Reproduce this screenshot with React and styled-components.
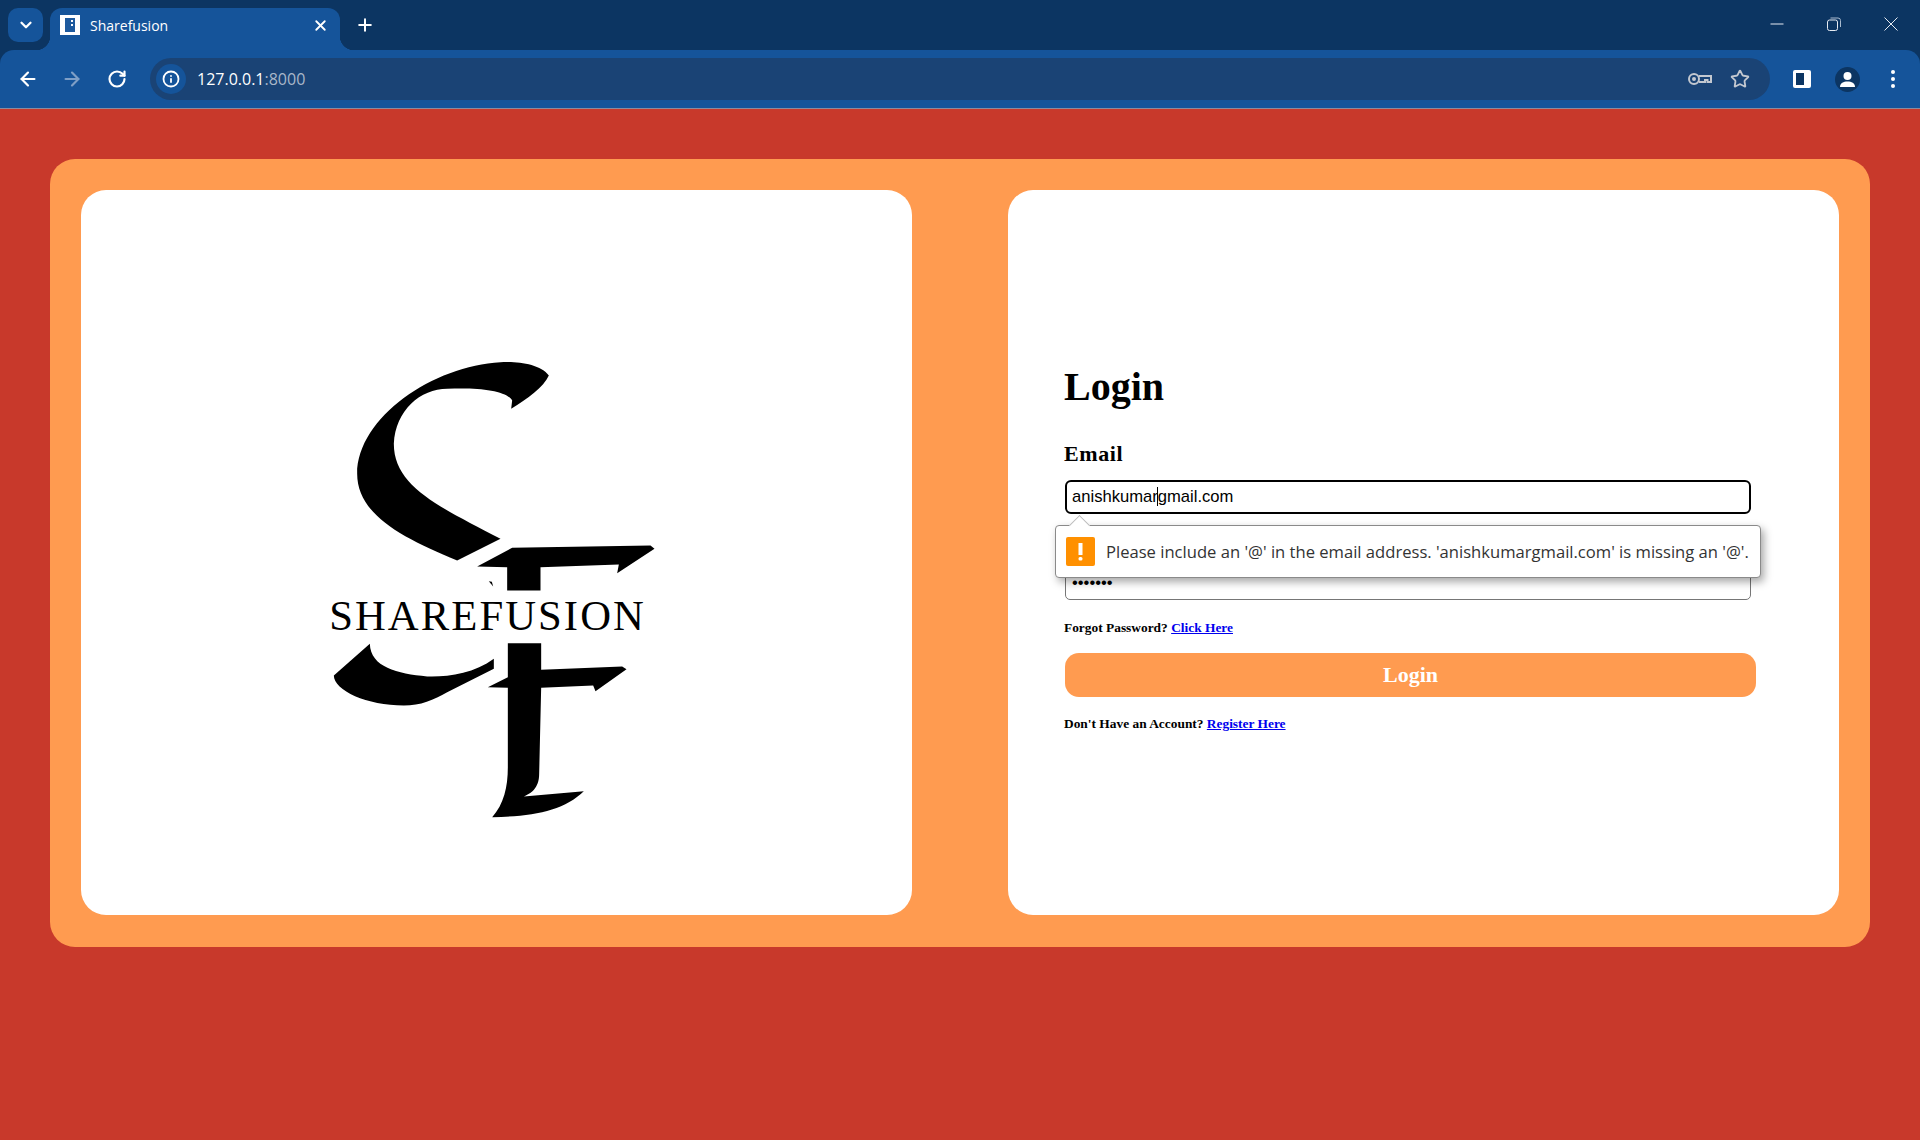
import React from "react";
import styled, { createGlobalStyle } from "styled-components";
import { ArrowLeft, ArrowRight, ChevronDown, Info, Plus, RotateCw, Star, X } from "lucide-react";

const GlobalStyle = createGlobalStyle`
	* {
		box-sizing: border-box;
	}

	body {
		margin: 0;
		background: #c8392b;
		font-family: "Liberation Serif", serif;
	}
`;

const BrowserChrome = styled.header`
	background: #0c3562;
`;

const TabStrip = styled.div`
	height: 50px;
	display: flex;
	align-items: flex-end;
	padding-left: 8px;
	color: #fff;
`;

const TabSwitcher = styled.div`
	position: relative;
	z-index: 1;
	width: 35px;
	height: 34px;
	margin-bottom: 8px;
	margin-right: 7px;
	border-radius: 10px;
	background: #15549a;
	display: flex;
	align-items: center;
	justify-content: center;
`;

const Tab = styled.div`
	position: relative;
	width: 290px;
	height: 42px;
	padding: 0 11px 8px 10px;
	background: #15549a;
	border-radius: 12px 12px 0 0;
	display: flex;
	align-items: center;
	gap: 10px;

	&::before,
	&::after {
		content: "";
		position: absolute;
		bottom: 0;
		width: 14px;
		height: 14px;
	}

	&::before {
		left: -14px;
		background: radial-gradient(circle at 0 0, #0c3562 14px, #15549a 14.5px);
	}

	&::after {
		right: -14px;
		background: radial-gradient(circle at 100% 0, #0c3562 14px, #15549a 14.5px);
	}
`;

const Favicon = styled.div`
	width: 20px;
	height: 20px;
	background: #fff;
	display: flex;
	align-items: center;
	justify-content: center;
`;

const TabTitle = styled.span`
	flex: 1;
	font-family: "Open Sans", sans-serif;
	font-size: 14px;
`;

const NewTab = styled.div`
	margin: 0 0 8px 15px;
	width: 20px;
	height: 34px;
	display: flex;
	align-items: center;
	justify-content: center;
`;

const WindowControls = styled.div`
	margin-left: auto;
	height: 100%;
	display: flex;
	align-items: flex-start;
`;

const WindowButton = styled.div`
	width: ${p => p.$width}px;
	height: 48px;
	display: flex;
	align-items: center;
	justify-content: center;
`;

const Toolbar = styled.div`
	height: 59px;
	background: #15549a;
	border-top-left-radius: 14px;
	border-top-right-radius: 14px;
	border-bottom: 1px solid #8b8b9e;
	display: flex;
	align-items: center;
	color: #fff;
`;

const NavButton = styled.div`
	width: ${p => p.$width}px;
	display: flex;
	justify-content: center;
	color: ${p => (p.$dim ? "#7f9fc6" : "#fff")};
`;

const Omnibox = styled.div`
	width: 1620px;
	height: 42px;
	margin-left: ${p => p.$left}px;
	padding: 0 20px 0 6px;
	border-radius: 21px;
	background: #1a4375;
	display: flex;
	align-items: center;
`;

const InfoBadge = styled.div`
	width: 30px;
	height: 30px;
	border-radius: 50%;
	background: #15549a;
	display: flex;
	align-items: center;
	justify-content: center;
	margin-right: 11px;
`;

const Url = styled.div`
	flex: 1;
	font-family: "Open Sans", sans-serif;
	font-size: 16px;
`;

const UrlPort = styled.span`
	color: #a9b7c9;
`;

const OmniIcons = styled.div`
	display: flex;
	align-items: center;
	gap: 18px;
	color: #c3c8d0;
`;

const ToolbarIcons = styled.div`
	flex: 1;
	display: flex;
	align-items: center;
	padding-left: 23px;
`;

const Avatar = styled.div`
	width: 25px;
	height: 25px;
	margin-left: 24px;
	border-radius: 50%;
	background: #0c3562;
	display: flex;
	align-items: center;
	justify-content: center;
`;

const MenuDots = styled.div`
	margin-left: 31px;
	display: flex;
	flex-direction: column;
	gap: 3px;

	span {
		width: 4px;
		height: 4px;
		border-radius: 50%;
		background: #fff;
	}
`;

const Card = styled.main`
	margin: 50px 50px 0;
	height: 788px;
	padding: 31px 31px 32px;
	border-radius: 25px;
	background: #ff9b50;
	display: grid;
	grid-template-columns: 831px 831px;
	justify-content: space-between;
`;

const Panel = styled.section`
	background: #fff;
	border-radius: 25px;
`;

const LogoPanel = styled(Panel)`
	display: flex;
	align-items: center;
	justify-content: center;
`;

const FormPanel = styled(Panel)`
	padding: 174px 83px 0 56px;
`;

const Title = styled.h1`
	margin: 0 0 31px;
	font-size: 40px;
	line-height: 46px;
	font-weight: 700;
	color: #000;
`;

const FieldLabel = styled.label`
	display: block;
	height: 26px;
	margin-bottom: 13px;
	font-size: 22px;
	line-height: 26px;
	font-weight: 700;
	letter-spacing: 0.6px;
`;

const Field = styled.div`
	position: relative;
	width: 686px;
	margin: 0 0 ${p => p.$gap}px 1px;
`;

const EmailBox = styled.div`
	height: 34px;
	padding: 0 5px;
	border: 2px solid #000;
	border-radius: 6px;
	background: #fff;
	font-family: "Liberation Sans", sans-serif;
	font-size: 16.6px;
	line-height: 30px;
	white-space: nowrap;
	color: #000;
`;

const Caret = styled.i`
	display: inline-block;
	width: 1px;
	height: 19px;
	margin: 0 -0.5px;
	background: #000;
	vertical-align: -4px;
`;

const PasswordInput = styled.input`
	display: block;
	width: 100%;
	height: 34px;
	padding: 0 6px;
	border: 1px solid #767676;
	border-radius: 5px;
	background: #fff;
	font-family: "Liberation Sans", sans-serif;
	font-size: 16.6px;
	color: #000;
`;

const Bubble = styled.div`
	position: absolute;
	z-index: 2;
	top: 45px;
	left: -10px;
	width: 706px;
	height: 53px;
	padding: 0 10px;
	border: 1px solid #8a8a8a;
	border-radius: 4px;
	background: #fff;
	box-shadow: 3px 4px 8px rgba(0, 0, 0, 0.35);
	display: flex;
	align-items: center;
	gap: 11px;
	font-family: "Open Sans", sans-serif;
	font-size: 16.6px;
	color: #333;
	white-space: nowrap;

	&::before {
		content: "";
		position: absolute;
		top: -8px;
		left: 16px;
		width: 14px;
		height: 14px;
		background: #fff;
		border-top: 1px solid #bbb;
		border-left: 1px solid #bbb;
		transform: rotate(45deg);
	}
`;

const HelpLine = styled.p`
	margin: 0;
	font-size: 13.4px;
	line-height: 16px;
	font-weight: 700;
	color: #000;

	a {
		color: #0000ee;
	}
`;

const SubmitButton = styled.button`
	display: block;
	width: 691px;
	height: 44px;
	margin: 17px 0 19px 1px;
	border: 0;
	border-radius: 14px;
	background: #ff9b50;
	color: #fff;
	font-family: "Liberation Serif", serif;
	font-size: 22px;
	font-weight: 700;
`;

const Logo = () => (
	<svg width="600" height="600" viewBox="-310.5 -262.5 1800 1800" aria-label="Sharefusion logo">
		<path d="M745 105 C720 70 650 62 600 65 C400 75 170 230 170 400 C170 520 300 590 470 660 L600 595 C420 500 280 440 280 310 C285 210 360 145 440 145 C530 140 620 150 635 180 L632 205 C680 175 730 140 745 105 Z" />
		<path d="M530 678 L635 622 L1050 615 L1062 625 L950 698 L955 672 L720 680 L720 750 L620 750 L620 680 Z" />
		<path d="M565 722 L574 724 L578 738 Z" />
		<text
			x="86"
			y="868"
			fontFamily="'Liberation Serif', serif"
			fontSize="128"
			textLength="944"
			lengthAdjust="spacing"
		>
			SHAREFUSION
		</text>
		<path d="M622 908 L722 908 L722 988 L965 978 L978 986 L885 1052 L878 1035 L722 1042 L716 1300 C716 1345 690 1360 670 1368 L850 1352 C790 1410 700 1428 575 1430 C610 1390 622 1340 622 1280 L622 1042 L562 1040 L622 1010 Z" />
		<path d="M208 910 L100 1005 C100 1050 200 1095 310 1095 C360 1095 400 1078 440 1055 L580 985 L580 955 C520 1000 440 1010 380 1008 C290 1000 210 980 208 910 Z" />
	</svg>
);

const App = () => (
	<>
		<GlobalStyle />
		<BrowserChrome>
			<TabStrip>
				<TabSwitcher>
					<ChevronDown size={18} strokeWidth={3} />
				</TabSwitcher>
				<Tab>
					<Favicon>
						<svg width="12" height="14" viewBox="0 0 12 14">
							<rect x="1" y="0" width="10" height="14" fill="#1e5a9e" />
							<rect x="7" y="2" width="2" height="2" fill="#fff" />
							<rect x="7" y="6" width="2" height="2" fill="#fff" />
						</svg>
					</Favicon>
					<TabTitle>Sharefusion</TabTitle>
					<X size={17} strokeWidth={2.6} />
				</Tab>
				<NewTab>
					<Plus size={20} strokeWidth={2.4} />
				</NewTab>
				<WindowControls>
					<WindowButton $width={57}>
						<svg width="14" height="14" viewBox="0 0 14 14">
							<path d="M0.5 7 H13.5" stroke="#e6ebf2" fill="none" />
						</svg>
					</WindowButton>
					<WindowButton $width={57}>
						<svg width="14" height="14" viewBox="0 0 14 14" fill="none" stroke="#e6ebf2">
							<rect x="0.5" y="3" width="10" height="10.5" rx="2" />
							<path d="M3.5 1 H11 Q13.5 1 13.5 3.5 V10" stroke="#a9bace" />
						</svg>
					</WindowButton>
					<WindowButton $width={58}>
						<svg width="14" height="14" viewBox="0 0 14 14">
							<path d="M0.5 0.5 L13.5 13.5 M13.5 0.5 L0.5 13.5" stroke="#e6ebf2" fill="none" />
						</svg>
					</WindowButton>
				</WindowControls>
			</TabStrip>
			<Toolbar>
				<NavButton $width={56}>
					<ArrowLeft size={22} strokeWidth={2.4} />
				</NavButton>
				<NavButton $width={32} $dim>
					<ArrowRight size={22} strokeWidth={2.4} />
				</NavButton>
				<NavButton $width={58}>
					<RotateCw size={20} strokeWidth={2.6} />
				</NavButton>
				<Omnibox $left={4}>
					<InfoBadge>
						<Info size={18} strokeWidth={2.4} />
					</InfoBadge>
					<Url>
						127.0.0.1<UrlPort>:8000</UrlPort>
					</Url>
					<OmniIcons>
						<svg width="24" height="14" viewBox="0 0 24 14" fill="none" stroke="currentColor" strokeWidth="2">
							<circle cx="6" cy="7" r="5" />
							<circle cx="6" cy="7" r="1" />
							<path d="M11 4 H23 V10 H19.5 V8 H17 V10 H11" />
						</svg>
						<Star size={20} strokeWidth={2.2} />
					</OmniIcons>
				</Omnibox>
				<ToolbarIcons>
					<svg width="18" height="18" viewBox="0 0 18 18">
						<rect width="18" height="18" rx="2" fill="#fff" />
						<rect x="3" y="3" width="8" height="12" fill="#0c3562" />
					</svg>
					<Avatar>
						<svg width="17" height="17" viewBox="0 0 17 17" fill="#fff">
							<circle cx="8.5" cy="5" r="4" />
							<path d="M1 16 C1 12 4.5 10.5 8.5 10.5 C12.5 10.5 16 12 16 16 Z" />
						</svg>
					</Avatar>
					<MenuDots>
						<span />
						<span />
						<span />
					</MenuDots>
				</ToolbarIcons>
			</Toolbar>
		</BrowserChrome>
		<Card>
			<LogoPanel>
				<Logo />
			</LogoPanel>
			<FormPanel>
				<Title>Login</Title>
				<FieldLabel>Email</FieldLabel>
				<Field $gap={13}>
					<EmailBox>
						anishkumar
						<Caret />
						gmail.com
					</EmailBox>
					<Bubble>
						<svg width="29" height="29" viewBox="0 0 29 29">
							<rect width="29" height="29" rx="2" fill="#ff9000" />
							<rect x="12.5" y="6" width="4" height="12" fill="#fff" />
							<rect x="12.5" y="20" width="4" height="3.5" rx="1.5" fill="#fff" />
						</svg>
						Please include an '@' in the email address. 'anishkumargmail.com' is missing an '@'.
					</Bubble>
				</Field>
				<FieldLabel>Password</FieldLabel>
				<Field $gap={20}>
					<PasswordInput type="password" defaultValue="1234567" readOnly />
				</Field>
				<HelpLine>
					Forgot Password? <a href="#forgot">Click Here</a>
				</HelpLine>
				<SubmitButton type="button">Login</SubmitButton>
				<HelpLine>
					Don't Have an Account? <a href="#register">Register Here</a>
				</HelpLine>
			</FormPanel>
		</Card>
	</>
);

export default App;
